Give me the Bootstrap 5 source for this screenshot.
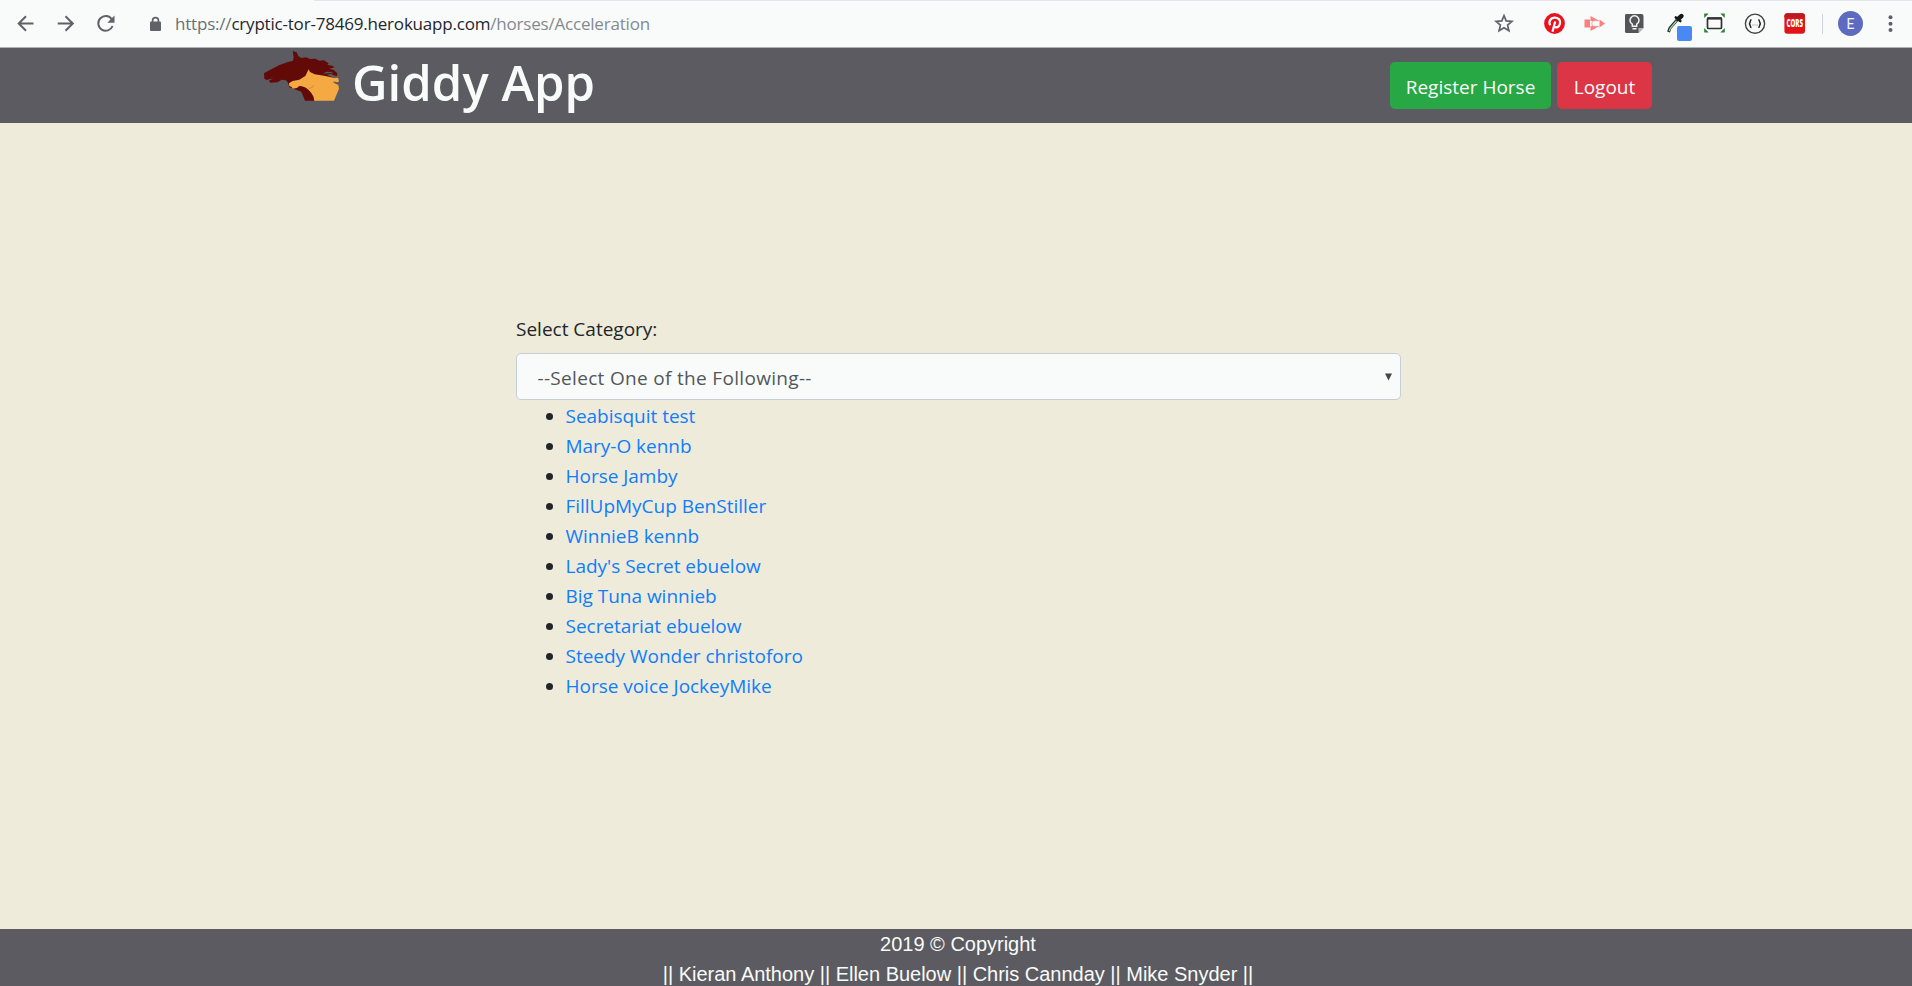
<!DOCTYPE html>
<html lang="en">
<head>
<meta charset="utf-8">
<title>Giddy App</title>
<link href="https://cdn.jsdelivr.net/npm/bootstrap@5.3.0/dist/css/bootstrap.min.css" rel="stylesheet">
<style>
html, body { height: 100%; }
body { background: #eeebdb; color: #212529; font: 19px/30px "Open Sans", "Noto Sans", sans-serif; overflow: hidden; }
.chrome-bar { height: 48px; background: linear-gradient(90deg, #f9fbfa 314px, #e3e5ea 314px) top / 100% 1px no-repeat #f9fbfa; border-bottom: 1px solid #b0b3b2; }
.chrome-bar svg { display: block; flex: none; }
.address { font-size: 17px; letter-spacing: -.2px; line-height: 48px; margin-left: -1px; color: #24272b; }
.address .scheme { color: #6a7076; }
.address .path { color: #85898e; }
.site-bar { height: 75px; background: #5c5b61; padding: 0 260px; }
.site-title { font-size: 49px; font-weight: 600; letter-spacing: .05px; color: #f9fbfa; line-height: 69px; margin-left: 8px; }
.site-bar .btn { font-size: 19px; line-height: 30px; height: 47px; padding: 10px 0 7px; border: 0; border-radius: 5px; color: #f9fbfa; margin-top: 14px; }
.btn-register { background: #28a745; width: 161px; margin-right: 6px; }
.btn-leave { background: #dc3545; width: 95px; }
.picker { width: 885px; margin: 191px auto 0 516px; }
.picker .form-select { height: 47px; margin-top: 9px; padding: 1px 18px 0 20.5px; background: #f9fbfa; border: 1px solid #c8ced6; border-radius: 5px; font-size: 19px; letter-spacing: .32px; line-height: 47px; color: #52565b; }
.picker .caret { position: absolute; right: 9px; top: 20px; }
.horses { padding: 1px 0 0 49.5px; }
.horses a { color: #107dfa; text-decoration: none; letter-spacing: -.02px; }
.site-foot { height: 57px; background: #5c5b61; color: #f9fbfa; font: 20px/30px "Liberation Sans", Arial, sans-serif; letter-spacing: -.01px; padding-left: 4px; overflow: hidden; }
</style>
</head>
<body class="d-flex flex-column">

<div class="chrome-bar d-flex flex-shrink-0">
  <svg width="176" height="47" fill="none" stroke="#5f6368" stroke-width="2">
    <path d="M33.500 23.500H19M26 16.200l-7.300 7.300 7.300 7.300"/>
    <path d="M57.700 23.500H72.500M65.500 16.200l7.300 7.300-7.300 7.300"/>
    <path d="M111.800 19.200A7.400 7.400 0 1 0 112.600 26"/>
    <path d="M114.500 15.500v7.200h-7.200z" fill="#5f6368" stroke="none"/>
    <rect x="150" y="21.500" width="11" height="9.500" rx="1" fill="#5f6368" stroke="none"/>
    <path d="M152.600 22v-1.500a2.900 2.900 0 0 1 5.800 0V22" stroke-width="1.700"/>
  </svg>
  <div class="address flex-grow-1"><span class="scheme">https://</span>cryptic-tor-78469.herokuapp.com<span class="path">/horses/Acceleration</span></div>
  <svg width="50.500" height="47"><path d="M20 15.700l2.200 5.200 5.700.5-4.300 3.700 1.300 5.600-4.900-3-4.900 3 1.300-5.600-4.300-3.700 5.700-.5z" fill="none" stroke="#5f6368" stroke-width="1.700"/></svg>
  <svg width="40" height="47"><circle cx="19.500" cy="23.500" r="10.400" fill="#e8131d"/><path d="M15.300 25.300c-2.300-3.800.4-7.600 4.500-7.600 3.600 0 5.600 2.200 5.300 5-.3 3-2.100 4.900-4.100 4.700-1-.1-1.700-.6-2-1.200M20.200 21.500l-2.700 10.300" fill="none" stroke="#fff" stroke-width="2.200"/></svg>
  <svg width="40" height="47"><path d="M9.500 19.500h5.500v8H9.500zM24.500 19.500l5.500 4-5.500 4z" fill="#fa8080"/><path d="M15.500 21V16l9 5M15.500 26v5l9-5" fill="#fa8080"/><path d="M22.500 20.700h-3c-3.500 0-3.500 5.600 0 5.600h3" fill="#f9fbfa" stroke="#fa9a9a"/></svg>
  <svg width="40" height="47"><path d="M11 14h15.500q2 0 2 2v12l-5 5H11.500q-1.500 0-1.500-1.500v-16q0-1.500 1-1.500z" fill="#535557"/><path d="M23.500 33v-5h5z" fill="#bbb8bd"/><path d="M17.300 26.300v-2.100a4.500 4.500 0 1 1 4.400 0v2.100zM17.500 28.700h4" fill="none" stroke="#f5f5f5" stroke-width="1.500"/></svg>
  <svg width="40" height="47"><path d="M13.500 32l1.500-4 7-8" stroke="#26372d" stroke-width="3" fill="none"/><path d="M14.200 31l1.300-3 6-7" stroke="#9fd1aa" stroke-width="1.200" fill="none"/><path d="M20.800 17.500l4.500 3.500" stroke="#16181a" stroke-width="2.600" stroke-linecap="round"/><path d="M23.500 18.700l3-2.700" stroke="#16181a" stroke-width="4.400" stroke-linecap="round"/><rect x="22" y="26" width="15" height="15" rx="2" fill="#4a89f3"/></svg>
  <svg width="40" height="47"><path d="M9.200 18v-4.500h4.500zM25.300 13.500h4.500V18zM9.200 28v4.500h4.500zM29.800 28v4.500h-4.500z" fill="#2f8235"/><rect x="12.500" y="18" width="14" height="10.500" rx="1" fill="none" stroke="#303234" stroke-width="1.700"/><path d="M12 18.500h15" stroke="#303234" stroke-width="2.200"/></svg>
  <svg width="40" height="47"><circle cx="20" cy="23.700" r="9.600" fill="none" stroke="#404246" stroke-width="1.400"/><path d="M16.500 19.800c-2 0-.5 3.400-2.500 3.900 2 .5.500 3.900 2.500 3.900M23.300 19.800c2 0 .5 3.400 2.500 3.900-2 .5-.5 3.900-2.500 3.900" fill="none" stroke="#222" stroke-width="1.500"/><path d="M17.500 25h5" stroke="#888" stroke-dasharray="1 1"/></svg>
  <svg width="40" height="47"><rect x="9.400" y="13.300" width="20.600" height="20.400" rx="3" fill="#e2141a"/><path d="M9.400 17.500v-1.200q0-3 3-3h14.600q3 0 3 3v1.200z" fill="#b91c20"/><text x="19.700" y="27.300" text-anchor="middle" textLength="16.500" lengthAdjust="spacingAndGlyphs" font-family="Open Sans" font-size="10" font-weight="800" fill="#fff">CORS</text></svg>
  <svg width="15" height="47"><path d="M7.500 14v20" stroke="#cdd0d4"/></svg>
  <svg width="42" height="47"><circle cx="20.500" cy="23.500" r="12.500" fill="#5c6bc0"/><text x="20.500" y="28.500" text-anchor="middle" font-family="Roboto" font-size="14" fill="#f3f4fa">E</text></svg>
  <svg width="40.500" height="47" fill="#5f6368"><circle cx="18.500" cy="17.300" r="2"/><circle cx="18.500" cy="23.700" r="2"/><circle cx="18.500" cy="30" r="2"/></svg>
</div>

<nav class="site-bar d-flex align-items-start flex-shrink-0">
  <svg class="flex-shrink-0" width="84" height="56" viewBox="0 0 252 168">
    <path d="M98 9L110 13 115 24 124 30 138 28 150 33 166 32 178 38 192 37 206 46 202 50 218 54 224 58 208 62 221 66 232 76 231 84 215 80 220 76 200 80 234 94 200 110 120 130 88 118 84 104 78 97 65 95 53 103 32 104 26 99 40 91 20 96 13 92 12 76 28 67 60 50 84 42 99 38 101 28z" fill="#620a07"/>
    <path d="M146 64L150 72 164 79 192 83 224 90 234 89 237 100 233 103 220 100 235 111 237 122 222 158H162L160 144 148 130 136 119 120 114 110 120 98 122 95 117 88 114 87 106 98 99 118 95 136 84z" fill="#f5a942"/>
    <path d="M114 116Q126 112 138 120Q158 132 163 158H135L126 136z" fill="#620a07"/>
    <path d="M146 121q13 0 16-10" fill="none" stroke="#b96c28" stroke-width="1.500"/>
    <path d="M188 77l12-6 20 1-8 3zM206 82l14 1-4 3zM218 102l8 1 11 7-9-2z" fill="#5c5b61"/>
  </svg>
  <div class="site-title flex-grow-1">Giddy App</div>
  <a class="btn btn-register" href="#">Register Horse</a>
  <a class="btn btn-leave" href="#">Logout</a>
</nav>

<main class="picker flex-grow-1">
  <label class="d-block" for="category">Select Category:</label>
  <div class="position-relative">
    <div class="form-select" id="category">--Select One of the Following--</div>
    <svg class="caret" width="7" height="8"><path d="M0 .5h7L3.500 7.500z" fill="#43474b"/></svg>
  </div>
  <ul class="horses m-0">
    <li><a href="#">Seabisquit test</a></li>
    <li><a href="#">Mary-O kennb</a></li>
    <li><a href="#">Horse Jamby</a></li>
    <li><a href="#">FillUpMyCup BenStiller</a></li>
    <li><a href="#">WinnieB kennb</a></li>
    <li><a href="#">Lady's Secret ebuelow</a></li>
    <li><a href="#">Big Tuna winnieb</a></li>
    <li><a href="#">Secretariat ebuelow</a></li>
    <li><a href="#">Steedy Wonder christoforo</a></li>
    <li><a href="#">Horse voice JockeyMike</a></li>
  </ul>
</main>

<footer class="site-foot text-center flex-shrink-0">
  <div>2019 © Copyright</div>
  <div>|| Kieran Anthony || Ellen Buelow || Chris Cannday || Mike Snyder ||</div>
</footer>
<script src="https://cdn.jsdelivr.net/npm/bootstrap@5.3.0/dist/js/bootstrap.bundle.min.js"></script>
</body>
</html>
